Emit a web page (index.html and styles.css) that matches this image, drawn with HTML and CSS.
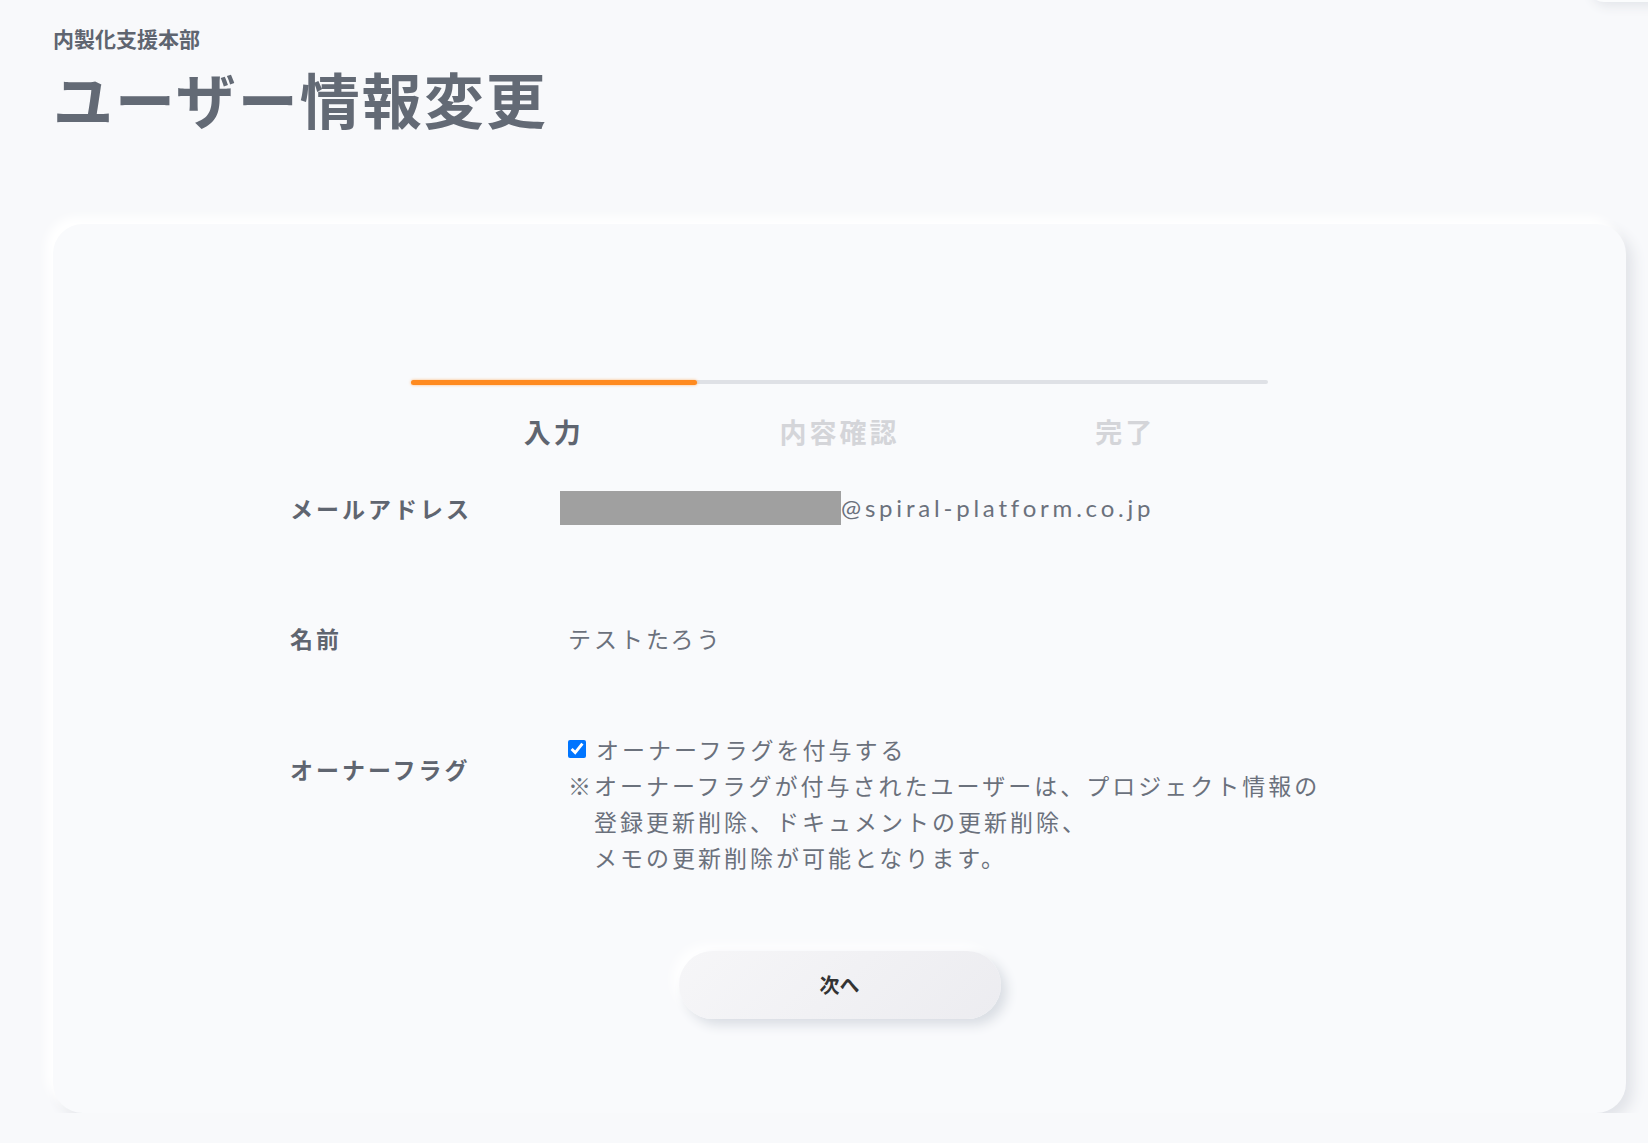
FILE: index.html
```html
<!DOCTYPE html>
<html lang="ja">
<head>
    <meta charset="UTF-8">
    <meta name="viewport" content="width=device-width, initial-scale=1.0">
    <title>ユーザー情報変更</title>
    <link rel="stylesheet" href="styles.css">
</head>
<body>
    <div class="user-menu"></div>

    <header class="page-head">
        <p class="dept">内製化支援本部</p>
        <h1 class="title">ユーザー情報変更</h1>
    </header>

    <main class="card">
        <div class="steps">
            <div class="steps-track">
                <div class="steps-fill" style="width: 33.4%"></div>
            </div>
            <ol class="steps-labels">
                <li class="is-active">入力</li>
                <li>内容確認</li>
                <li>完了</li>
            </ol>
        </div>

        <form class="form">
            <div class="form-row">
                <div class="form-label">メールアドレス</div>
                <div class="form-value email">
                    <span class="masked"></span><span class="domain">@spiral-platform.co.jp</span>
                </div>
            </div>

            <div class="form-row form-row--name">
                <div class="form-label">名前</div>
                <div class="form-value text-value">テストたろう</div>
            </div>

            <div class="form-row form-row--owner">
                <div class="form-label">オーナーフラグ</div>
                <div class="form-value text-value">
                    <label class="check">
                        <input type="checkbox" checked>
                        <span>オーナーフラグを付与する</span>
                    </label>
                    <p class="note">※オーナーフラグが付与されたユーザーは、プロジェクト情報の<br>登録更新削除、ドキュメントの更新削除、<br>メモの更新削除が可能となります。</p>
                </div>
            </div>
        </form>

        <div class="actions">
            <button type="button" class="btn-next">次へ</button>
        </div>
    </main>
</body>
</html>
```

FILE: styles.css
```css
body {
    margin: 0;
    background: #f8f9fb;
    font-family: "Noto Sans CJK JP", "Noto Sans", sans-serif;
    color: #636a75;
    overflow: hidden;
}

/* header menu button, mostly above the viewport */
.user-menu {
    position: absolute;
    top: -44px;
    right: -30px;
    width: 90px;
    height: 46px;
    border-radius: 16px;
    background: #fbfcfd;
    box-shadow: 4px 4px 12px #e3e5ea;
}

.page-head {
    padding: 22px 0 0 53px;
}
.dept {
    margin: 0;
    font-size: 21px;
    font-weight: 700;
    line-height: 32px;
    color: #5f6570;
}
.title {
    margin: 4px 0 0;
    font-size: 60px;
    font-weight: 700;
    letter-spacing: 2px;
    line-height: 80px;
    color: #636a75;
}

.card {
    width: 1573px;
    margin: 86px 0 0 53px;
    padding: 156px 0 90px;
    box-sizing: border-box;
    height: 889px;
    background: #f9fafc;
    border-radius: 30px;
    box-shadow: -7px -7px 10px #ffffff, 7px 7px 14px #e1e3e8;
}

/* progress */
.steps {
    width: 857px;
    margin: 0 auto;
}
.steps-track {
    height: 4px;
    background: #dfe1e6;
    border-radius: 2px;
}
.steps-fill {
    height: 5px;
    margin-top: -0.5px;
    background: #ff8a1f;
    border-radius: 3px;
    box-shadow: 0 0 3px rgba(255, 138, 31, 0.6);
}
.steps-labels {
    display: grid;
    grid-template-columns: repeat(3, 1fr);
    list-style: none;
    margin: 30px 0 0;
    padding: 0;
}
.steps-labels li {
    text-align: center;
    font-size: 27px;
    font-weight: 700;
    letter-spacing: 3px;
    line-height: 36px;
    color: #d4d5d9;
}
.steps-labels li.is-active {
    color: #5f6570;
}

/* form */
.form {
    margin: 41px 0 0 237px;
}
.form-row {
    display: grid;
    grid-template-columns: 270px 1fr;
    align-items: start;
}
.form-row--name {
    margin-top: 96px;
}
.form-row--owner {
    margin-top: 76px;
}
.form-label {
    font-size: 23px;
    font-weight: 700;
    letter-spacing: 3px;
    line-height: 34px;
    color: #5f6570;
}
.form-row--owner .form-label {
    padding-top: 21px;
}
.form-value {
    font-size: 23px;
    letter-spacing: 3px;
    line-height: 34px;
    color: #6b717c;
}
.text-value {
    padding-left: 8px;
}

.email {
    display: flex;
    align-items: center;
}
.masked {
    width: 281px;
    height: 34px;
    background: #a0a0a0;
}
.domain {
    font-family: "Lato", sans-serif;
    font-size: 24px;
    letter-spacing: 3.8px;
    line-height: 34px;
    color: #6b717c;
}

.form-row--owner .form-value {
    line-height: 36px;
}
.check {
    display: flex;
    align-items: center;
    gap: 10px;
}
.check input {
    width: 18px;
    height: 18px;
    margin: 0;
    accent-color: #0075ff;
}
.note {
    margin: 0;
    padding-left: 26px;
    text-indent: -26px;
}

.actions {
    display: flex;
    justify-content: center;
    margin-top: 76px;
}
.btn-next {
    width: 322px;
    height: 68px;
    border: none;
    border-radius: 34px;
    background: linear-gradient(135deg, #f6f6f8, #ececf0);
    box-shadow: 6px 6px 12px #d9dde3, -6px -6px 12px #ffffff;
    font-family: inherit;
    font-size: 20px;
    font-weight: 700;
    color: #333;
    cursor: pointer;
}
```
